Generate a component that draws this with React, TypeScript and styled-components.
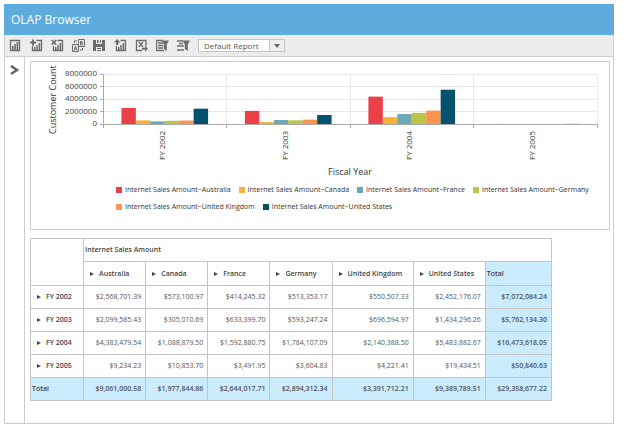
import React from "react";
import styled, { createGlobalStyle, css } from "styled-components";

const Global = createGlobalStyle`
  * { box-sizing: border-box; }
  body { margin: 0; background: #fff; }
  body, button, input { font-family: "Open Sans", "Noto Sans", sans-serif; }
`;

const Browser = styled.main`
  margin: 4px 10px 0 4px;
  color: #444;
  font-size: 8px;
`;

const Header = styled.header`
  display: flex;
  align-items: center;
  height: 31px;
  padding: 0 7px;
  background: #5eabdd;
`;

const Title = styled.h1`
  margin: 0;
  color: #fff;
  font-size: 12px;
  line-height: 16px;
  font-weight: 400;
`;

const Toolbar = styled.div`
  display: flex;
  align-items: center;
  height: 22px;
  padding: 0 4px;
  background: #ececec;
  border: 1px solid #d0d0d0;
  border-top: 0;
`;

const ToolButton = styled.button`
  display: flex;
  width: 13px;
  height: 13px;
  margin-right: 8px;
  padding: 0;
  border: 0;
  background: none;
  color: #6c6c6c;
`;

const Combo = styled.div`
  display: flex;
  height: 13px;
  width: 87px;
  border: 1px solid #c4c4c4;
  background: #fff;
`;

const ComboInput = styled.input`
  flex: 1;
  min-width: 0;
  padding: 0 0 0 5px;
  border: 0;
  background: none;
  color: #555;
  font-size: 8px;
  line-height: 10px;
`;

const ComboButton = styled.button`
  display: flex;
  align-items: center;
  justify-content: center;
  width: 15px;
  padding: 0;
  border: 0;
  border-left: 1px solid #c4c4c4;
  background: #eee;
  color: #666;
`;

const Body = styled.div`
  display: flex;
  border: 1px solid #ccc;
  border-top: 0;
`;

const Rail = styled.aside`
  display: flex;
  justify-content: center;
  align-items: flex-start;
  width: 20px;
  padding-top: 8px;
  border-right: 1px solid #ccc;
`;

const RailButton = styled.button`
  display: flex;
  padding: 0;
  border: 0;
  background: none;
  color: #666;
`;

const Content = styled.div`
  flex: 1;
  min-width: 0;
  padding: 4px 3px 22px 5px;
`;

const ChartPanel = styled.section`
  padding-bottom: 16px;
  border: 1px solid #ccc;
`;

const ChartSvg = styled.svg`
  display: block;
  width: 100%;
`;

const Legend = styled.ul`
  display: flex;
  flex-wrap: wrap;
  margin: 5px 12px 0 85px;
  padding: 0;
  gap: 5px 8px;
  list-style: none;
`;

const LegendItem = styled.li`
  display: flex;
  align-items: center;
  gap: 3px;
  color: #333;
  font-size: 7px;
  line-height: 12px;
  white-space: nowrap;
`;

const Swatch = styled.span<{ $color: string }>`
  width: 6px;
  height: 6px;
  background: ${(p) => p.$color};
`;

const Grid = styled.table`
  width: 90%;
  margin-top: 8px;
  border-collapse: collapse;
  table-layout: fixed;
  color: #555;
  font-size: 7px;
  line-height: 12px;
`;

const Row = styled.tr<{ $tall?: boolean }>`
  height: ${(p) => (p.$tall ? 24 : 23)}px;
`;

const cell = css`
  padding: 0 4px 0 2px;
  border: 1px solid #c4c4c4;
  white-space: nowrap;
`;

const Head = styled.th<{ $total?: boolean; $indent?: boolean }>`
  ${cell}
  padding-left: ${(p) => (p.$indent ? 6 : 1)}px;
  background: ${(p) => (p.$total ? "#cbebff" : "#fff")};
  color: #444;
  font-weight: 600;
  text-align: left;
`;

const Value = styled.td<{ $total?: boolean }>`
  ${cell}
  background: ${(p) => (p.$total ? "#cbebff" : "#fff")};
  font-weight: ${(p) => (p.$total ? 600 : 400)};
  text-align: right;
`;

const Expander = styled.button`
  display: flex;
  align-items: center;
  gap: 5px;
  padding: 0;
  border: 0;
  background: none;
  color: inherit;
  font: inherit;
`;

const SERIES = [
  { name: "Australia", color: "#ea4149" },
  { name: "Canada", color: "#f5b236" },
  { name: "France", color: "#6aa9b3" },
  { name: "Germany", color: "#bcc549" },
  { name: "United Kingdom", color: "#fa9450" },
  { name: "United States", color: "#01516f" },
];

const YEARS = [
  { name: "FY 2002", values: [2568701.39, 573100.97, 414245.32, 513353.17, 550507.33, 2452176.07], total: 7072084.24 },
  { name: "FY 2003", values: [2099585.43, 305010.69, 633399.7, 593247.24, 696594.97, 1434296.26], total: 5762134.3 },
  { name: "FY 2004", values: [4383479.54, 1088879.5, 1592880.75, 1784107.09, 2140388.5, 5483882.67], total: 16473618.05 },
  { name: "FY 2005", values: [9234.23, 10853.7, 3491.95, 3604.83, 4221.41, 19434.51], total: 50840.63 },
];

const TOTALS = [9061000.58, 1977844.86, 2644017.71, 2894312.34, 3391712.21, 9389789.51, 29358677.22];
const COLUMN_WIDTHS = [53, 62, 62, 62, 62, 81, 72, 66];

const money = (n: number) =>
  "$" + n.toLocaleString("en-US", { minimumFractionDigits: 2, maximumFractionDigits: 2 });

const SmallBars = () => (
  <>
    <path d="M6.5 1.5h5v10h-9V7" fill="none" stroke="currentColor" strokeWidth="1.300" />
    <path d="M4 8h1.500v3H4zM6.300 6h1.500v5H6.300zM8.600 4h1.600v7H8.600z" fill="currentColor" />
  </>
);

const ICONS: { label: string; art: React.ReactNode }[] = [
  {
    label: "New report",
    art: (
      <>
        <path d="M1.5 1.500h9v10h-9z" fill="none" stroke="currentColor" strokeWidth="1.300" />
        <path d="M3 7h1.600v4H3zM5.300 5h1.600v6H5.300zM7.600 3h1.600v8H7.600z" fill="currentColor" />
      </>
    ),
  },
  {
    label: "Add report",
    art: (<><SmallBars /><path d="M0 3.500h6M3 .5v6" stroke="currentColor" strokeWidth="2" /></>),
  },
  {
    label: "Remove report",
    art: (<><SmallBars /><path d="M.7 1l4.600 4.600M5.300 1L.7 5.600" stroke="currentColor" strokeWidth="1.600" /></>),
  },
  {
    label: "Rename report",
    art: (
      <>
        <path d="M.5 5.500h6v7h-6zM6.500 .5h6v7h-6z" fill="none" stroke="currentColor" />
        <path d="M2 11.500L3.500 7 5 11.500M2.500 10h2M8.500 2v4M8.500 2.500h1.500l.7.700-.7.800H8.500M10 4l.8 1-.8 1H8.500M2.500 4V2h2.500M10.500 9v2H8" fill="none" stroke="currentColor" />
      </>
    ),
  },
  {
    label: "Save report",
    art: (
      <>
        <path d="M0 1h3v4h6V1h3v11H9V8H3v4H0z" fill="currentColor" />
        <path d="M4 1h1.500v3H4zM7 1h1v3H7zM4 9h4v1H4zM4 11h4v1H4z" fill="currentColor" />
      </>
    ),
  },
  {
    label: "Load report",
    art: (<><SmallBars /><path d="M3.200 0L6.500 3.500H4.300V6H2.100V3.500H0z" fill="currentColor" /></>),
  },
  {
    label: "Export",
    art: (
      <>
        <path d="M7 11.500H1.500v-10h9.500V7M4 3l4 5M8 3L4 8" fill="none" stroke="currentColor" strokeWidth="1.300" />
        <path d="M7 8.700h3V6.500l3 3.200-3 3.100v-2.100H7z" fill="currentColor" />
      </>
    ),
  },
  {
    label: "Column filter",
    art: (
      <>
        <path d="M8 11.500H.5v-10H7M2 4h5M2 6.500h5M2 9h5" fill="none" stroke="currentColor" strokeWidth="1.300" />
        <path d="M5.500 1.500H13l-2.200 3.700V12L7.800 10V5.200z" fill="currentColor" />
      </>
    ),
  },
  {
    label: "Row filter",
    art: (
      <>
        <path d="M0 2h6M2 4.500h4M0 7h7M0 11h7" fill="none" stroke="currentColor" strokeWidth="1.400" />
        <path d="M5.500 1.500H13l-2.200 3.700V12L7.800 10V5.200z" fill="currentColor" />
      </>
    ),
  },
];

const Caret = () => (
  <svg width="4" height="6" viewBox="0 0 4 6" aria-hidden="true">
    <path d="M0 1l4 2-4 2z" fill="currentColor" />
  </svg>
);

const PLOT = { left: 72, right: 566, top: 12, bottom: 62 };
const GROUP = (PLOT.right - PLOT.left) / YEARS.length;
const BAR = GROUP * 0.117;
const TICKS = [8000000, 6000000, 4000000, 2000000, 0];
const yOf = (v: number) => PLOT.bottom - (v / 8000000) * (PLOT.bottom - PLOT.top);

const Chart = () => (
  <ChartSvg viewBox="0 0 578 117" role="img" aria-label="Customer Count by Fiscal Year">
    {TICKS.map((t) => (
      <g key={t} shapeRendering="crispEdges">
        <path d={`M${PLOT.left} ${yOf(t)}H${PLOT.right}`} stroke={t ? "#e8e8e8" : "#aaa"} />
        <path d={`M${PLOT.left - 3} ${yOf(t)}h3`} stroke="#aaa" />
        <text x={PLOT.left - 6} y={yOf(t) + 2} fontSize="8" fill="#444" textAnchor="end">{t}</text>
      </g>
    ))}
    {[0, 1, 2, 3, 4].map((i) => (
      <g key={i} shapeRendering="crispEdges">
        <path d={`M${PLOT.left + i * GROUP} ${PLOT.top}V${PLOT.bottom}`} stroke={i ? "#e8e8e8" : "#aaa"} />
        <path d={`M${PLOT.left + i * GROUP} ${PLOT.bottom}v4`} stroke="#aaa" />
      </g>
    ))}
    {YEARS.map((year, i) => {
      const start = PLOT.left + i * GROUP;
      const mid = start + GROUP / 2;
      return (
        <g key={year.name}>
          {year.values.map((v, j) => (
            <rect
              key={j}
              x={start + (GROUP - BAR * 6) / 2 + j * BAR}
              y={yOf(v)}
              width={BAR}
              height={PLOT.bottom - yOf(v)}
              fill={SERIES[j].color}
            />
          ))}
          <text transform={`translate(${mid} 98) rotate(-90)`} fontSize="8" fill="#333">{year.name}</text>
        </g>
      );
    })}
    <text transform="translate(25 72) rotate(-90)" fontSize="9" fill="#333">Customer Count</text>
    <text x={(PLOT.left + PLOT.right) / 2} y="113" fontSize="9" fill="#333" textAnchor="middle">Fiscal Year</text>
  </ChartSvg>
);

export default function App() {
  return (
    <>
      <Global />
      <Browser>
        <Header><Title>OLAP Browser</Title></Header>
        <Toolbar role="toolbar" aria-label="Report tools">
          {ICONS.map((icon) => (
            <ToolButton key={icon.label} type="button" aria-label={icon.label}>
              <svg width="13" height="13" viewBox="0 0 13 13" aria-hidden="true">{icon.art}</svg>
            </ToolButton>
          ))}
          <Combo>
            <ComboInput aria-label="Report" defaultValue="Default Report" />
            <ComboButton type="button" aria-label="Choose report">
              <svg width="6" height="4" viewBox="0 0 6 4" aria-hidden="true">
                <path d="M0 0h6L3 4z" fill="currentColor" />
              </svg>
            </ComboButton>
          </Combo>
        </Toolbar>
        <Body>
          <Rail>
            <RailButton type="button" aria-label="Expand panel">
              <svg width="10" height="10" viewBox="0 0 10 10" aria-hidden="true">
                <path d="M1 1l6 4-6 4" fill="none" stroke="currentColor" strokeWidth="2.500" />
              </svg>
            </RailButton>
          </Rail>
          <Content>
            <ChartPanel>
              <Chart />
              <Legend>
                {SERIES.map((s) => (
                  <LegendItem key={s.name}>
                    <Swatch $color={s.color} />
                    Internet Sales Amount~{s.name}
                  </LegendItem>
                ))}
              </Legend>
            </ChartPanel>
            <Grid>
              <colgroup>
                {COLUMN_WIDTHS.map((w, i) => <col key={i} width={w} />)}
              </colgroup>
              <thead>
                <Row>
                  <Head rowSpan={2} />
                  <Head colSpan={7} scope="colgroup">Internet Sales Amount</Head>
                </Row>
                <Row $tall>
                  {SERIES.map((s) => (
                    <Head key={s.name} scope="col" $indent>
                      <Expander type="button"><Caret />{s.name}</Expander>
                    </Head>
                  ))}
                  <Head scope="col" $total>Total</Head>
                </Row>
              </thead>
              <tbody>
                {YEARS.map((year) => (
                  <Row key={year.name}>
                    <Head scope="row" $indent>
                      <Expander type="button"><Caret />{year.name}</Expander>
                    </Head>
                    {year.values.map((v, i) => <Value key={i}>{money(v)}</Value>)}
                    <Value $total>{money(year.total)}</Value>
                  </Row>
                ))}
                <Row>
                  <Head scope="row" $total>Total</Head>
                  {TOTALS.map((v) => <Value key={v} $total>{money(v)}</Value>)}
                </Row>
              </tbody>
            </Grid>
          </Content>
        </Body>
      </Browser>
    </>
  );
}
